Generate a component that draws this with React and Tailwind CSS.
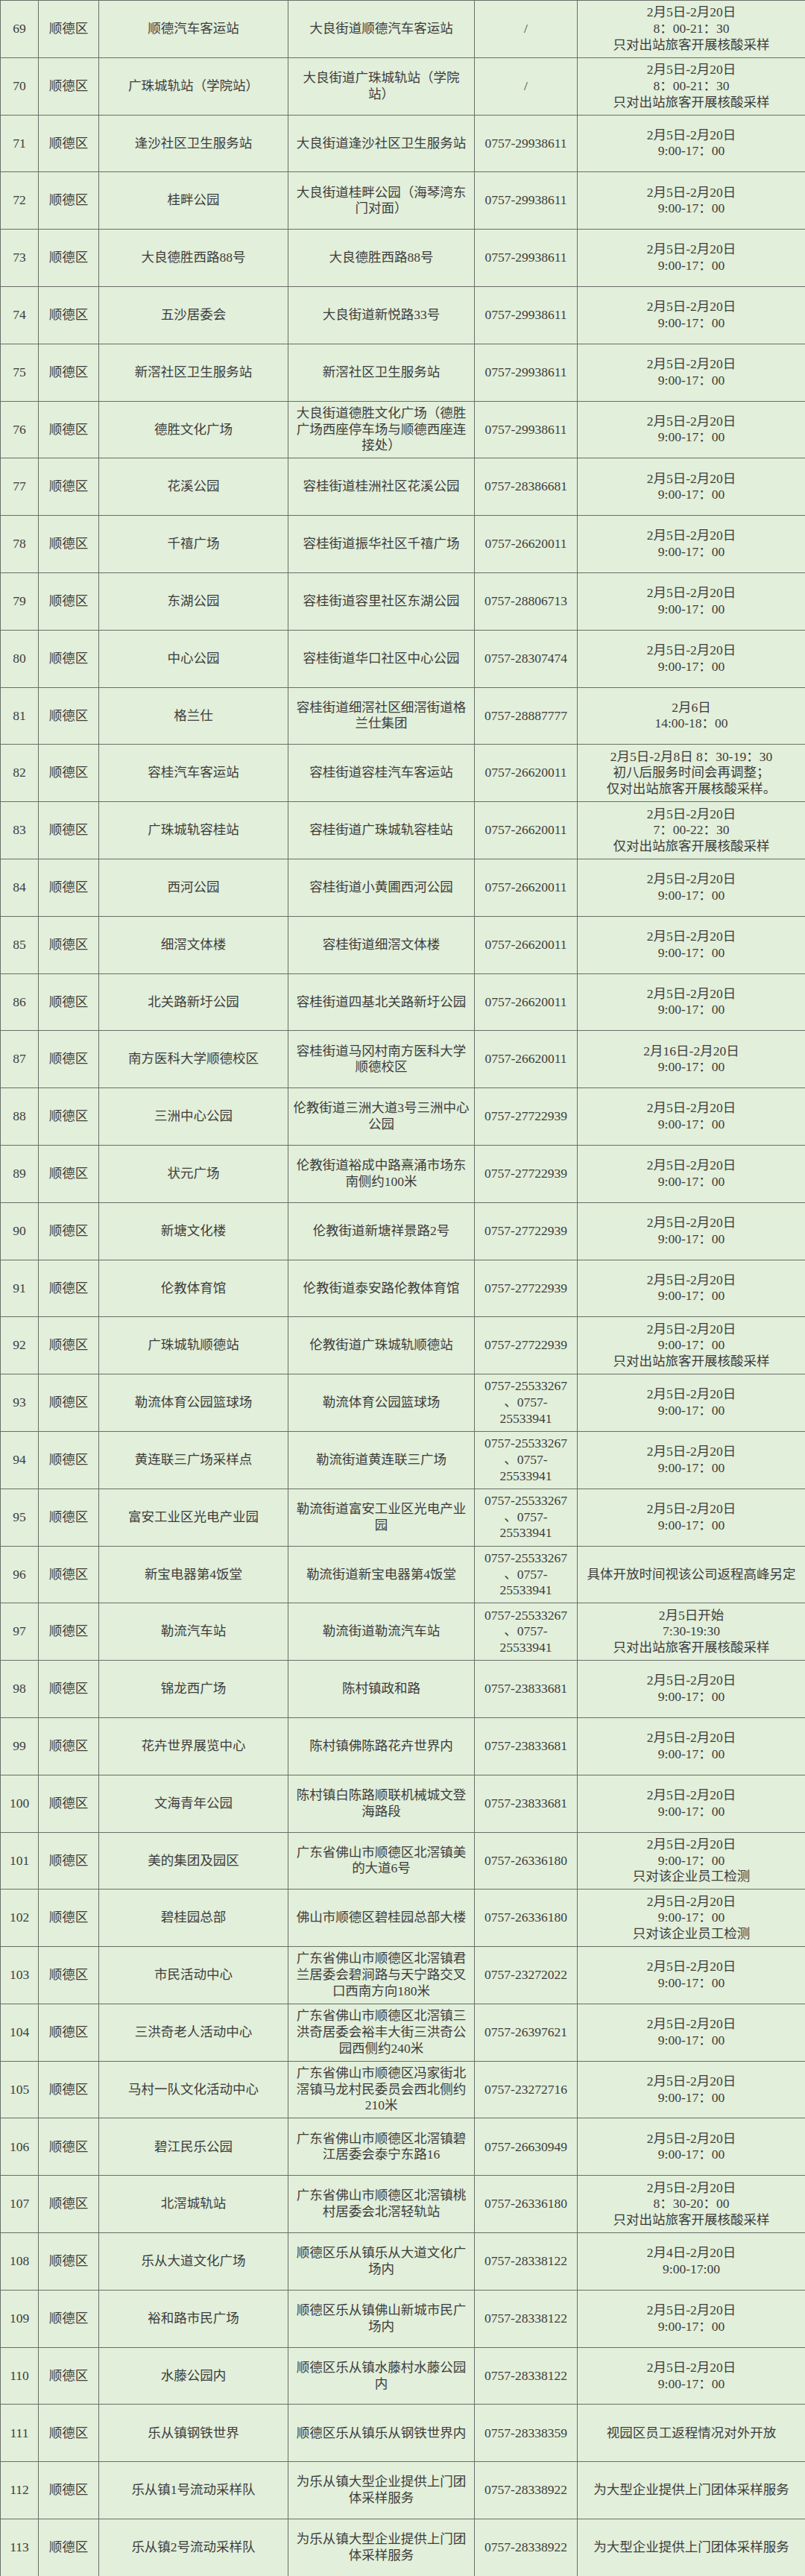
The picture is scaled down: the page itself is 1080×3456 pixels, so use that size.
const T1 = ['2月5日-2月20日', '9:00-17：00']
const D = '顺德区'

const rows = [
  [69, '顺德汽车客运站', ['大良街道顺德汽车客运站'], ['/'], ['2月5日-2月20日', '8：00-21：30', '只对出站旅客开展核酸采样']],
  [70, '广珠城轨站（学院站）', ['大良街道广珠城轨站（学院', '站）'], ['/'], ['2月5日-2月20日', '8：00-21：30', '只对出站旅客开展核酸采样']],
  [71, '逢沙社区卫生服务站', ['大良街道逢沙社区卫生服务站'], ['0757-29938611'], T1],
  [72, '桂畔公园', ['大良街道桂畔公园（海琴湾东', '门对面）'], ['0757-29938611'], T1],
  [73, '大良德胜西路88号', ['大良德胜西路88号'], ['0757-29938611'], T1],
  [74, '五沙居委会', ['大良街道新悦路33号'], ['0757-29938611'], T1],
  [75, '新滘社区卫生服务站', ['新滘社区卫生服务站'], ['0757-29938611'], T1],
  [76, '德胜文化广场', ['大良街道德胜文化广场（德胜', '广场西座停车场与顺德西座连', '接处）'], ['0757-29938611'], T1],
  [77, '花溪公园', ['容桂街道桂洲社区花溪公园'], ['0757-28386681'], T1],
  [78, '千禧广场', ['容桂街道振华社区千禧广场'], ['0757-26620011'], T1],
  [79, '东湖公园', ['容桂街道容里社区东湖公园'], ['0757-28806713'], T1],
  [80, '中心公园', ['容桂街道华口社区中心公园'], ['0757-28307474'], T1],
  [81, '格兰仕', ['容桂街道细滘社区细滘街道格', '兰仕集团'], ['0757-28887777'], ['2月6日', '14:00-18：00']],
  [82, '容桂汽车客运站', ['容桂街道容桂汽车客运站'], ['0757-26620011'], ['2月5日-2月8日 8：30-19：30', '初八后服务时间会再调整；', '仅对出站旅客开展核酸采样。']],
  [83, '广珠城轨容桂站', ['容桂街道广珠城轨容桂站'], ['0757-26620011'], ['2月5日-2月20日', '7：00-22：30', '仅对出站旅客开展核酸采样']],
  [84, '西河公园', ['容桂街道小黄圃西河公园'], ['0757-26620011'], T1],
  [85, '细滘文体楼', ['容桂街道细滘文体楼'], ['0757-26620011'], T1],
  [86, '北关路新圩公园', ['容桂街道四基北关路新圩公园'], ['0757-26620011'], T1],
  [87, '南方医科大学顺德校区', ['容桂街道马冈村南方医科大学', '顺德校区'], ['0757-26620011'], ['2月16日-2月20日', '9:00-17：00']],
  [88, '三洲中心公园', ['伦教街道三洲大道3号三洲中心', '公园'], ['0757-27722939'], T1],
  [89, '状元广场', ['伦教街道裕成中路熹涌市场东', '南侧约100米'], ['0757-27722939'], T1],
  [90, '新塘文化楼', ['伦教街道新塘祥景路2号'], ['0757-27722939'], T1],
  [91, '伦教体育馆', ['伦教街道泰安路伦教体育馆'], ['0757-27722939'], T1],
  [92, '广珠城轨顺德站', ['伦教街道广珠城轨顺德站'], ['0757-27722939'], ['2月5日-2月20日', '9:00-17：00', '只对出站旅客开展核酸采样']],
  [93, '勒流体育公园篮球场', ['勒流体育公园篮球场'], ['0757-25533267', '、0757-', '25533941'], T1],
  [94, '黄连联三广场采样点', ['勒流街道黄连联三广场'], ['0757-25533267', '、0757-', '25533941'], T1],
  [95, '富安工业区光电产业园', ['勒流街道富安工业区光电产业', '园'], ['0757-25533267', '、0757-', '25533941'], T1],
  [96, '新宝电器第4饭堂', ['勒流街道新宝电器第4饭堂'], ['0757-25533267', '、0757-', '25533941'], ['具体开放时间视该公司返程高峰另定']],
  [97, '勒流汽车站', ['勒流街道勒流汽车站'], ['0757-25533267', '、0757-', '25533941'], ['2月5日开始', '7:30-19:30', '只对出站旅客开展核酸采样']],
  [98, '锦龙西广场', ['陈村镇政和路'], ['0757-23833681'], T1],
  [99, '花卉世界展览中心', ['陈村镇佛陈路花卉世界内'], ['0757-23833681'], T1],
  [100, '文海青年公园', ['陈村镇白陈路顺联机械城文登', '海路段'], ['0757-23833681'], T1],
  [101, '美的集团及园区', ['广东省佛山市顺德区北滘镇美', '的大道6号'], ['0757-26336180'], ['2月5日-2月20日', '9:00-17：00', '只对该企业员工检测']],
  [102, '碧桂园总部', ['佛山市顺德区碧桂园总部大楼'], ['0757-26336180'], ['2月5日-2月20日', '9:00-17：00', '只对该企业员工检测']],
  [103, '市民活动中心', ['广东省佛山市顺德区北滘镇君', '兰居委会碧涧路与天宁路交叉', '口西南方向180米'], ['0757-23272022'], T1],
  [104, '三洪奇老人活动中心', ['广东省佛山市顺德区北滘镇三', '洪奇居委会裕丰大街三洪奇公', '园西侧约240米'], ['0757-26397621'], T1],
  [105, '马村一队文化活动中心', ['广东省佛山市顺德区冯家街北', '滘镇马龙村民委员会西北侧约', '210米'], ['0757-23272716'], T1],
  [106, '碧江民乐公园', ['广东省佛山市顺德区北滘镇碧', '江居委会泰宁东路16'], ['0757-26630949'], T1],
  [107, '北滘城轨站', ['广东省佛山市顺德区北滘镇桃', '村居委会北滘轻轨站'], ['0757-26336180'], ['2月5日-2月20日', '8：30-20：00', '只对出站旅客开展核酸采样']],
  [108, '乐从大道文化广场', ['顺德区乐从镇乐从大道文化广', '场内'], ['0757-28338122'], ['2月4日-2月20日', '9:00-17:00']],
  [109, '裕和路市民广场', ['顺德区乐从镇佛山新城市民广', '场内'], ['0757-28338122'], T1],
  [110, '水藤公园内', ['顺德区乐从镇水藤村水藤公园', '内'], ['0757-28338122'], T1],
  [111, '乐从镇钢铁世界', ['顺德区乐从镇乐从钢铁世界内'], ['0757-28338359'], ['视园区员工返程情况对外开放']],
  [112, '乐从镇1号流动采样队', ['为乐从镇大型企业提供上门团', '体采样服务'], ['0757-28338922'], ['为大型企业提供上门团体采样服务']],
  [113, '乐从镇2号流动采样队', ['为乐从镇大型企业提供上门团', '体采样服务'], ['0757-28338922'], ['为大型企业提供上门团体采样服务']],
]

const Cell = ({ lines, className = '' }) => (
  <div className={'flex flex-col items-center justify-center text-center border-r border-b border-[#6a6e67] ' + className}>
    {lines.map((l, i) => (
      <span key={i} className="whitespace-nowrap">{l}</span>
    ))}
  </div>
)

const App = () => {
  return (
    <div
      className="w-[1080px] bg-[#e2efda] text-[#3d3d3d] text-[17.5px] leading-[21.7px] border-l border-t border-[#6a6e67]"
      style={{ fontFamily: '"Liberation Serif", "Noto Sans CJK SC", serif' }}
    >
      {rows.map(([no, name, addr, tel, time]) => (
        <div key={no} className="grid grid-cols-[51px_81px_254px_250px_138px_306px] h-[76.8px]">
          <Cell lines={[String(no)]} />
          <Cell lines={[D]} />
          <Cell lines={[name]} />
          <Cell lines={addr} />
          <Cell lines={tel} />
          <Cell lines={time} />
        </div>
      ))}
    </div>
  )
}

export default App
